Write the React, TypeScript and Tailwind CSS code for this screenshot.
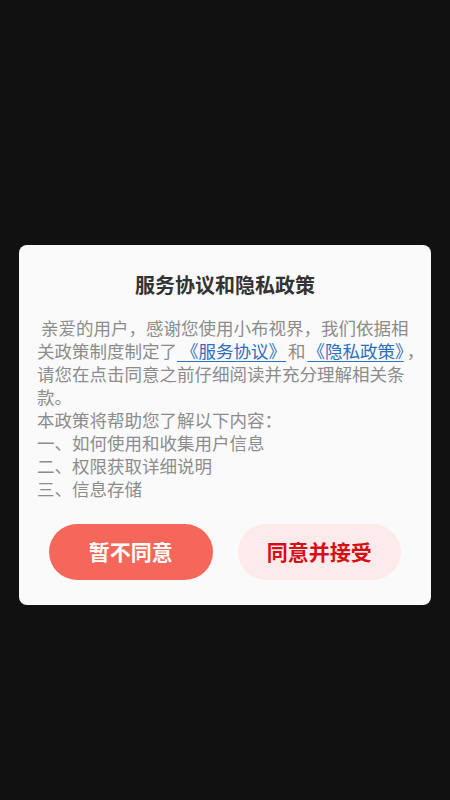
export default function App() {
  const font = { fontFamily: '"Noto Sans CJK SC", "Noto Sans", sans-serif' };
  return (
    <div className="min-h-[800px] w-full bg-[#111111] pt-[245px]" style={font}>
      <div className="mx-[19px] rounded-[8px] bg-[#fafafa] pt-[28px] pb-[25px]">
        <h1 className="text-center text-[20px] font-bold leading-[24px] text-[#333333]">
          服务协议和隐私政策
        </h1>
        <div className="mt-[19px] px-[18px] text-[17.5px] leading-[23px] text-[#8c8c8c]">
          <div className="whitespace-nowrap indent-[4px]">亲爱的用户，感谢您使用小布视界，我们依据相</div>
          <div className="whitespace-nowrap">
            关政策制度制定了
            <span className="text-[#2f6fbf] underline underline-offset-[3px]"> 《服务协议》</span>
            <span className="px-[2px]">和</span>
            <span className="text-[#2f6fbf] underline underline-offset-[3px]">《隐私政策》</span>
            <span className="pl-[3px]">，</span>
          </div>
          <div className="whitespace-nowrap">请您在点击同意之前仔细阅读并充分理解相关条</div>
          <div>款。</div>
          <div>本政策将帮助您了解以下内容：</div>
          <div>一、如何使用和收集用户信息</div>
          <div>二、权限获取详细说明</div>
          <div>三、信息存储</div>
        </div>
        <div className="mt-[24px] flex gap-[25px] px-[30px]">
          <button className="h-[56px] flex-1 rounded-full bg-[#f4675a] text-[21px] font-bold text-white">
            暂不同意
          </button>
          <button className="h-[56px] flex-1 rounded-full bg-[#fdeaea] text-[21px] font-bold text-[#d40f16]">
            同意并接受
          </button>
        </div>
      </div>
    </div>
  );
}
